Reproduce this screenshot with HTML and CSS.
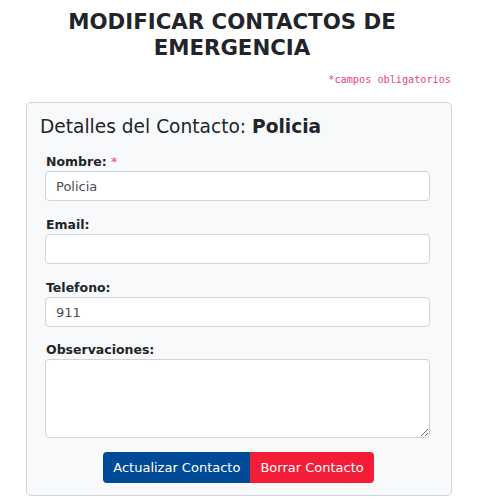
FILE: index.html
```html
<!DOCTYPE html>
<html lang="es">
<head>
<meta charset="utf-8">
<title>Modificar contactos de emergencia</title>
<link rel="stylesheet" href="styles.css">
</head>
<body>
<main class="page">
  <h1 class="title">MODIFICAR CONTACTOS DE<br>EMERGENCIA</h1>
  <p class="required-note">*campos obligatorios</p>
  <section class="card">
    <h2 class="card-title">Detalles del Contacto: <strong>Policia</strong></h2>
    <form class="form">
      <div class="field">
        <label class="label" for="nombre">Nombre: <span class="star">*</span></label>
        <input class="input" id="nombre" type="text" value="Policia">
      </div>
      <div class="field">
        <label class="label" for="email">Email:</label>
        <input class="input" id="email" type="email" value="">
      </div>
      <div class="field">
        <label class="label" for="telefono">Telefono:</label>
        <input class="input" id="telefono" type="text" value="911">
      </div>
      <div class="field field-notes">
        <label class="label" for="obs">Observaciones:</label>
        <textarea class="input textarea" id="obs"></textarea>
      </div>
      <div class="actions">
        <button type="button" class="btn btn-primary">Actualizar Contacto</button>
        <button type="button" class="btn btn-danger">Borrar Contacto</button>
      </div>
    </form>
  </section>
</main>
</body>
</html>
```
FILE: styles.css
```css
* { box-sizing: border-box; }
html, body { margin: 0; padding: 0; background: #fff; }
body {
  font-family: "DejaVu Sans", "Open Sans", sans-serif;
  color: #212529;
}
.page {
  width: 426px;
  margin-left: 26px;
  padding-top: 9px;
}
.title {
  margin: 0;
  font-size: 21.3px;
  line-height: 26px;
  font-weight: 700;
  text-align: center;
  color: #212529;
  padding-right: 14px;
}
.required-note {
  margin: 12px 0 0;
  text-align: right;
  font-family: "DejaVu Sans Mono", "Liberation Mono", monospace;
  font-size: 10.2px;
  line-height: 14px;
  color: #e83e8c;
  padding-right: 1px;
}
.card {
  margin-top: 15px;
  background: #f8f9fa;
  border: 1px solid #ced4da;
  border-radius: 5px;
  padding: 12px 21px 12px 13px;
}
.card-title {
  margin: 0;
  font-size: 18.6px;
  line-height: 24px;
  font-weight: 400;
}
.card-title strong { font-weight: 700; }
.form {
  margin-top: 15px;
  padding-left: 5px;
  display: flex;
  flex-direction: column;
  gap: 16px;
}
.field {
  display: flex;
  flex-direction: column;
  gap: 1px;
}
.field-notes { margin-top: -1px; }
.label {
  font-size: 12.5px;
  line-height: 16px;
  font-weight: 700;
  padding-left: 1px;
}
.star { color: #e83e8c; font-weight: 400; }
.input {
  width: 385px;
  height: 30px;
  border: 1px solid #ced4da;
  border-radius: 4px;
  background: #fff;
  padding: 0 10px;
  font-family: inherit;
  font-size: 13px;
  color: #495057;
}
.textarea {
  height: 79px;
  resize: vertical;
}
.actions {
  display: flex;
  justify-content: center;
  margin-top: -2px;
  padding-left: 2px;
}
.btn {
  height: 31px;
  border: none;
  font-family: inherit;
  font-size: 13px;
  color: #fff;
  padding: 0 10px;
}
.btn-primary {
  background: #004a97;
  border-radius: 4px 0 0 4px;
}
.btn-danger {
  background: #f41d38;
  border-radius: 0 4px 4px 0;
}
```
